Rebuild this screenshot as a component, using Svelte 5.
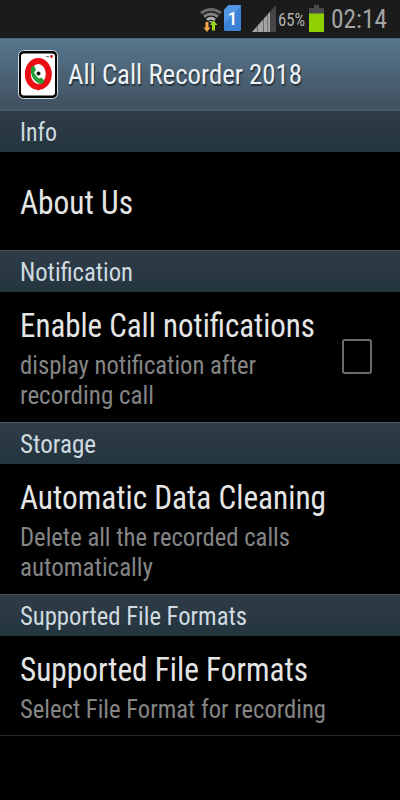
<script lang="ts">
	interface Item {
		title: string;
		width: number;
		summary?: { text: string; width: number }[];
		checkbox?: boolean;
	}

	interface Section {
		name: string;
		width: number;
		item: Item;
	}

	const sections: Section[] = [
		{ name: 'Info', width: 37, item: { title: 'About Us', width: 113 } },
		{
			name: 'Notification',
			width: 113,
			item: {
				title: 'Enable Call notifications',
				width: 295,
				summary: [
					{ text: 'display notification after', width: 236 },
					{ text: 'recording call', width: 134 }
				],
				checkbox: true
			}
		},
		{
			name: 'Storage',
			width: 76,
			item: {
				title: 'Automatic Data Cleaning',
				width: 306,
				summary: [
					{ text: 'Delete all the recorded calls', width: 270 },
					{ text: 'automatically', width: 133 }
				]
			}
		},
		{
			name: 'Supported File Formats',
			width: 227,
			item: {
				title: 'Supported File Formats',
				width: 288,
				summary: [{ text: 'Select File Format for recording', width: 306 }]
			}
		}
	];

	// condense a line of text to the given width
	function condense(node: HTMLElement, width: number) {
		node.style.transform = `scaleX(${width / node.getBoundingClientRect().width})`;
	}
</script>

<div class="screen">
	<div class="status">
		<svg class="wifi" width="22" height="28" viewBox="0 0 22 28">
			<g fill="none" stroke="#6a6c6e" stroke-width="2.8">
				<path d="M1 8Q11 1 21 8" />
				<path d="M4 11.5Q11 6.5 18 11.5" stroke="#808284" />
				<path d="M7 14.8Q11 11.8 15 14.8" stroke="#b0b1b2" />
			</g>
			<path d="M9 16h4l-2 2z" fill="#bbb" />
			<path d="M5.5 17v5.500H3.500L7 27l3.500-4.500H8.500V17z" fill="#f5a848" />
			<path d="M12 25.500V20H10L13.500 15.500 17.500 20H15v5.500z" fill="#9bd81a" />
		</svg>
		<svg class="sim" width="17" height="26" viewBox="0 0 17 26">
			<path d="M4.500 0H16q1 0 1 1v24q0 1-1 1H1q-1 0-1-1V5z" fill="#3c83d8" />
			<path d="M4.500 0H16q1 0 1 1L0 19V5z" fill="#5396e3" />
			<text x="8.500" y="19.500" text-anchor="middle">1</text>
		</svg>
		<svg class="signal" width="24" height="27" viewBox="0 0 24 27">
			<path d="M0 27L24 0v27z" fill="#464646" />
			<path d="M0 27l5-5.600V27zM6 27v-6.700l5-5.600V27zM12 27V13.500l3.500-4V27zM16 27V9l2-2.200V27z" fill="#a4a4a4" />
			<path d="M5.500 20.500V27M11.500 14V27" stroke="#6a6a6a" />
		</svg>
		<span class="slot percent"><span class="line" use:condense={27}>65%</span></span>
		<svg class="battery" width="15" height="27" viewBox="0 0 15 27">
			<path d="M5 0h5v3h5v6H0V3h5z" fill="#4a4a4c" />
			<path d="M0 8.500h15V27H0z" fill="#91d000" />
		</svg>
		<span class="slot clock"><span class="line" use:condense={56}>02:14</span></span>
	</div>

	<header>
		<svg width="40" height="49" viewBox="0 0 40 49">
			<rect x=".5" y=".5" width="39" height="48" rx="5" fill="#050505" stroke="#d3dbe0" />
			<rect x="3" y="3.500" width="34" height="42" rx="3" fill="#fff" />
			<path d="M28 6.500h3" stroke="#777" />
			<circle cx="33.500" cy="6.500" r="1.400" fill="#d51a22" />
			<ellipse cx="20.300" cy="24" rx="10.500" ry="13" fill="#fff" stroke="#eb0c14" stroke-width="6" />
			<path d="M18.500 38l2 3 1.500-3z" fill="#eb0c14" />
			<path
				d="M13 18.500c1-3 3-3 4-1l1 3-2 1.500c1 3 3 5 5 6.500l2-1 3 2.500c1 1-1 4-3 4-6-1-11-8-10-15.500z"
				fill="#249d36"
			/>
			<circle cx="20.500" cy="23.500" r="2" fill="#06170a" />
		</svg>
		<h1 class="line" use:condense={234}>All Call Recorder 2018</h1>
	</header>

	{#each sections as { name, width, item } (name)}
		<h2><span class="line" use:condense={width}>{name}</span></h2>
		<div class="item" class:single={!item.summary}>
			<div class="text">
				<div class="title"><span class="line" use:condense={item.width}>{item.title}</span></div>
				{#each item.summary ?? [] as row (row.text)}
					<div class="summary"><span class="line" use:condense={row.width}>{row.text}</span></div>
				{/each}
			</div>
			{#if item.checkbox}
				<span class="checkbox"></span>
			{/if}
		</div>
	{/each}
	<div class="divider"></div>
</div>

<style>
	:global(body) {
		margin: 0;
		background: #000;
	}

	.screen {
		width: 400px;
		height: 800px;
		overflow: hidden;
		background: #000;
		font-family: Roboto, sans-serif;
		font-stretch: 75%;
	}

	.line {
		display: inline-block;
		transform-origin: left center;
		white-space: nowrap;
	}

	.status {
		display: flex;
		height: 38px;
		box-sizing: border-box;
		padding: 5px 0 0 200px;
		background: #1b1b1b;
	}

	.sim {
		margin-left: 2px;
	}

	.sim text {
		font-size: 19px;
		font-weight: 500;
		fill: #fff;
	}

	.signal {
		margin-left: 11px;
	}

	.slot {
		display: block;
	}

	.percent {
		width: 27px;
		margin-left: 2px;
		color: #b0b0b0;
		font-size: 17.5px;
		line-height: 30px;
	}

	.battery {
		margin-left: 4px;
	}

	.clock {
		width: 56px;
		margin-left: 7px;
		color: #a4a4a4;
		font-size: 26px;
		line-height: 28px;
	}

	header {
		display: flex;
		align-items: center;
		gap: 10px;
		height: 72px;
		box-sizing: border-box;
		padding-left: 18px;
		border-top: 1px solid #4d697e;
		border-bottom: 1px solid #4a5c6a;
		background: linear-gradient(#58768d, #40505f);
	}

	h1 {
		margin: 1px 0 0;
		color: #edf2f7;
		font-size: 28.5px;
		font-weight: 400;
		text-shadow: 1px 2px 1px #26323c;
	}

	h2 {
		height: 42px;
		margin: 0;
		box-sizing: border-box;
		padding-left: 20px;
		border-top: 1px solid #4b5963;
		background: linear-gradient(#2f3c48, #24353e);
		color: #d0dbe1;
		font-size: 26px;
		font-weight: 400;
		line-height: 43px;
	}

	.item {
		display: flex;
		justify-content: space-between;
		padding: 14px 28px 12px 20px;
	}

	.item.single {
		padding: 31px 20px 29px;
	}

	.title {
		height: 38px;
		margin-bottom: 6px;
		color: #e5e5e5;
		font-size: 33px;
		line-height: 39px;
	}

	.single .title {
		margin: 0;
	}

	.summary {
		height: 30px;
		color: #858585;
		font-size: 26px;
		line-height: 30px;
	}

	.item:nth-last-child(2) {
		padding-bottom: 11px;
	}

	.checkbox {
		width: 30px;
		height: 35px;
		margin-top: 33px;
		box-sizing: border-box;
		border: 2px solid #6d6a71;
		border-radius: 3px;
	}

	.text {
		width: 300px;
	}

	.divider {
		height: 1px;
		background: #2a2a2a;
	}
</style>
